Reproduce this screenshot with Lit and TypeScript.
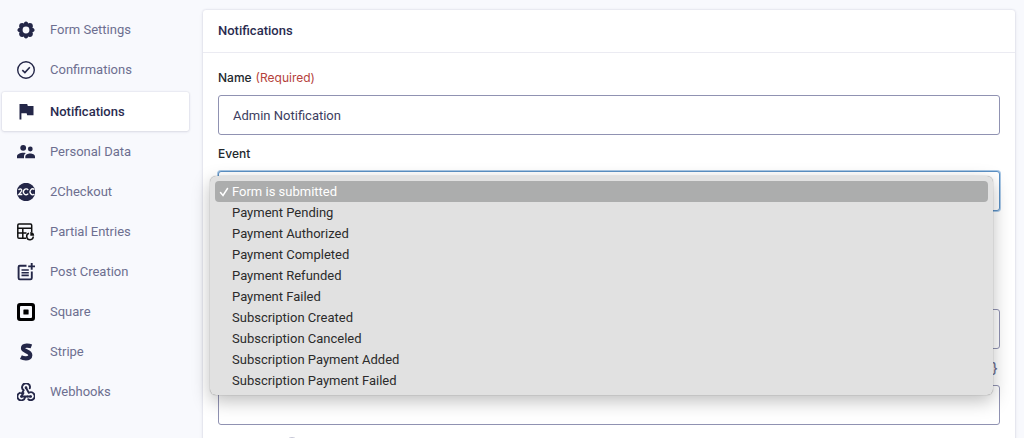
import { LitElement, html, svg, css } from "lit";
import { customElement, property, state } from "lit/decorators.js";
import { classMap } from "lit/directives/class-map.js";

const icons = {
  gear: svg`<path fill-rule="evenodd" d="M7.2 1.4Q9-.6 10.8 1.4L11.3 2.6L12.5 2.1Q15.900 1.900 15.900 5.500L15.400 6.700L16.600 7.200Q18.600 9 16.600 10.800L15.400 11.300L15.900 12.500Q15.900 16.100 12.500 15.900L11.300 15.400L10.800 16.600Q9 18.600 7.200 16.600L6.700 15.400L5.500 15.900Q2.100 16.100 2.100 12.500L2.600 11.300L1.400 10.800Q-.6 9 1.400 7.200L2.600 6.700L2.100 5.500Q2.100 1.900 5.500 2.100L6.700 2.600ZM9 5.600A3.400 3.400 0 1 0 9 12.400A3.400 3.400 0 1 0 9 5.600Z"/>`,
  check: svg`<g fill="none" stroke="currentColor" stroke-width="1.400"><circle cx="9" cy="9" r="8.300"/><path d="M5.300 9.200L7.900 11.600L12.800 6.300" stroke-width="1.600"/></g>`,
  flag: svg`<path d="M2.500 1H10.200L10.800 3H16.500V12.200H10.200L9.600 10.300H4.400V16.500H2.500Z"/>`,
  people: svg`<circle cx="6.200" cy="4.800" r="2.900"/><circle cx="13.300" cy="6" r="2.400"/><path d="M0 15.200V13.300C0 10.900 3.400 9.700 6.200 9.700C7.100 9.700 8 9.800 8.900 10.100C7.700 11 7 12.200 7 13.600V15.200Z"/><path d="M8.300 15.200V13.700C8.300 11.600 11 10.500 13.200 10.500S18 11.600 18 13.700V15.200Z"/>`,
  twoCheckout: svg`<circle cx="9" cy="9" r="9.200"/><g fill="none" stroke="#fff" stroke-width="1.300"><path d="M1.700 7.100Q2 5.900 3.300 5.900Q4.800 6 4.700 7.400Q4.500 8.700 1.900 11.500H5.300"/><path d="M11.200 7A2.700 2.900 0 1 0 11.200 10.700"/><path d="M17.400 6.500A2.700 2.900 0 1 0 17.400 11.100"/></g>`,
  partial: svg`<g fill="none" stroke="#111" stroke-width="1.500"><path d="M9 15.300H2Q.8 15.300 .8 14V2.200Q.8 1 2 1H13.500Q14.700 1 14.700 2.200V9"/><path d="M.8 5.300H14.700M.8 10H9.500M5.800 5.300V15.300"/><path d="M12 10.300A3.300 3.300 0 1 0 16.300 13.500" stroke-width="1.500"/></g><path fill="#111" d="M13.300 8.900A3.800 3.800 0 0 1 17.200 12.700H13.300Z"/>`,
  post: svg`<g fill="none" stroke="currentColor" stroke-width="1.900"><path d="M9.500 2.800H2.800Q1.600 2.800 1.600 4.100V15Q1.600 16.400 2.800 16.400H13.400Q14.800 16.400 14.800 15V8.500"/><path d="M14.700 0V6.800M11.200 3.400H18"/><path d="M4.500 7H11.800M4.500 9.700H11.800M4.500 12.400H11.800" stroke-width="1.600"/></g>`,
  square: svg`<path fill="#000" fill-rule="evenodd" d="M3 0H15Q18 0 18 3V15Q18 18 15 18H3Q0 18 0 15V3Q0 0 3 0ZM4 3Q3 3 3 4V14Q3 15 4 15H14Q15 15 15 14V4Q15 3 14 3ZM7 6.400H11Q11.600 6.400 11.600 7V11Q11.600 11.600 11 11.600H7Q6.400 11.600 6.400 11V7Q6.400 6.400 7 6.400Z"/>`,
  stripe: svg`<path fill="none" stroke="currentColor" stroke-width="4.200" d="M14.400 3.400C12.800 2.800 11.200 2.600 9.500 2.700C7.200 2.800 6 3.900 6 5.300C6 8.600 13.300 8 13.300 12.200C13.300 14.500 11.300 15.400 8.700 15.300C6.900 15.300 5.300 14.900 3.900 14.200"/>`,
  webhook: svg`<g fill="none" stroke-linecap="round" stroke-linejoin="round"><path stroke="currentColor" stroke-width="1.900" d="M12.800 5.300A3.900 3.900 0 1 0 6.700 7.300L4.700 10.500M4.700 13.500H10.500M2.900 9.800A3.900 3.900 0 1 0 8.100 14.200M9 4.800L11.800 9.800A3.900 3.900 0 1 1 11.300 16.200"/><path stroke="currentColor" stroke-width="2.700" d="M9 4.700V4.800M4.400 13.500H4.500M13.600 13.500H13.700"/><path stroke="currentColor" stroke-width="1.900" d="M10.500 13.500H13.500M4.500 13.300L6.500 10"/></g>`,
};

type IconName = keyof typeof icons;

const sections: { label: string; icon: IconName }[] = [
  { label: "Form Settings", icon: "gear" },
  { label: "Confirmations", icon: "check" },
  { label: "Notifications", icon: "flag" },
  { label: "Personal Data", icon: "people" },
  { label: "2Checkout", icon: "twoCheckout" },
  { label: "Partial Entries", icon: "partial" },
  { label: "Post Creation", icon: "post" },
  { label: "Square", icon: "square" },
  { label: "Stripe", icon: "stripe" },
  { label: "Webhooks", icon: "webhook" },
];

const events = [
  "Form is submitted",
  "Payment Pending",
  "Payment Authorized",
  "Payment Completed",
  "Payment Refunded",
  "Payment Failed",
  "Subscription Created",
  "Subscription Canceled",
  "Subscription Payment Added",
  "Subscription Payment Failed",
];

@customElement("settings-nav")
export class SettingsNav extends LitElement {
  @property() current = "";

  static styles = css`
    :host {
      display: block;
      padding: 10px 14px 0 2px;
    }
    .item {
      display: flex;
      align-items: center;
      gap: 15px;
      height: 40px;
      padding-left: 15px;
      box-sizing: border-box;
      color: #6d6f90;
      font-size: 13px;
      line-height: 20px;
      text-decoration: none;
    }
    .active {
      height: 39px;
      margin: 2px 0 1px;
      background: #fff;
      border-radius: 2px;
      box-shadow: 0 0 2px rgba(50, 50, 93, 0.2), 0 1px 3px rgba(50, 50, 93, 0.1);
      color: #2a2b4f;
      font-weight: 500;
    }
    .icon {
      width: 18px;
      height: 18px;
      flex: none;
      fill: currentColor;
      color: #242748;
    }
  `;

  render() {
    return html`<nav aria-label="Settings">
      ${sections.map(
        (s) => html`<a
          href="#"
          class=${classMap({ item: true, active: s.label === this.current })}
          ><svg class="icon" viewBox="0 0 18 18" aria-hidden="true">${icons[s.icon]}</svg
          >${s.label}</a
        >`
      )}
    </nav>`;
  }
}

@customElement("app-root")
export class AppRoot extends LitElement {
  @state() private event = events[0];

  static styles = css`
    :host {
      display: grid;
      grid-template-columns: 203px minmax(0, 1fr);
      height: 100vh;
      overflow: hidden;
      background: #f8f9fd;
      font-family: Roboto, "Liberation Sans", sans-serif;
      font-size: 13px;
      color: #2a2b4f;
    }
    .panel {
      margin: 10px 9px 0 0;
      background: #fff;
      border-radius: 3px;
      box-shadow: 0 0 2px rgba(50, 50, 93, 0.2), 0 1px 4px rgba(50, 50, 93, 0.08);
      height: max-content;
    }
    .title {
      margin: 0;
      padding: 11px 15px;
      border-bottom: 1px solid #ebebf2;
      font-size: 13px;
      line-height: 20px;
      font-weight: 500;
    }
    .form {
      display: flex;
      flex-direction: column;
      gap: 9px;
      padding: 15px;
    }
    .field {
      position: relative;
      display: flex;
      flex-direction: column;
      gap: 7px;
    }
    .caption {
      display: flex;
      align-items: center;
      gap: 4px;
      min-height: 20px;
      font-family: Inter, "Liberation Sans", sans-serif;
      font-size: 12px;
      line-height: 20px;
      font-weight: 500;
      color: #23282d;
    }
    .required {
      color: #b5423c;
      font-weight: 400;
    }
    .control {
      box-sizing: border-box;
      width: 100%;
      height: 40px;
      margin: 0;
      padding: 0 14px;
      border: 1px solid #9092b2;
      border-radius: 3px;
      background: #fff;
      color: #3c3d60;
      font: inherit;
    }
    .open {
      appearance: none;
      border-color: #5b90c4;
      box-shadow: 0 0 0 1px #a9c8e6;
      outline: none;
      color: transparent;
    }
    .choices {
      display: flex;
      gap: 16px;
      height: 26px;
      align-items: center;
    }
    .merge {
      margin-left: auto;
      padding: 0 2px;
      border: 0;
      background: none;
      color: #6d6f90;
      font: inherit;
      font-size: 14px;
      line-height: 20px;
    }
    .help {
      width: 14px;
      height: 14px;
      box-sizing: border-box;
      padding: 0;
      border: 1px solid #c4c5d6;
      border-radius: 50%;
      background: #fff;
    }
    .menu {
      position: absolute;
      z-index: 1;
      top: 32px;
      left: -8px;
      right: 7px;
      margin: 0;
      padding: 5px 5px 4px;
      border-radius: 6px;
      background: #e1e1e1;
      box-shadow: 0 0 1px rgba(0, 0, 0, 0.5), 0 6px 18px rgba(0, 0, 0, 0.26);
      color: #2b2b2b;
      list-style: none;
    }
    .option {
      display: flex;
      align-items: center;
      height: 21px;
      border-radius: 4px;
      line-height: 21px;
    }
    .selected {
      background: #acadad;
      color: #fff;
    }
    .tick {
      width: 10px;
      height: 10px;
      padding: 0 3px 0 4px;
      flex: none;
      fill: none;
      stroke: currentColor;
      stroke-width: 1.5;
      stroke-linecap: round;
      visibility: hidden;
    }
    .selected .tick {
      visibility: visible;
    }
  `;

  private renderOption(name: string) {
    const selected = name === this.event;
    return html`<li
      role="option"
      aria-selected=${selected}
      class=${classMap({ option: true, selected })}
      @click=${() => (this.event = name)}
    >
      <svg class="tick" viewBox="0 0 10 10" aria-hidden="true"><path d="M1.500 5.500L4 8.500L8.500 1.500" /></svg>
      <span>${name}</span>
    </li>`;
  }

  render() {
    return html`
      <settings-nav current="Notifications"></settings-nav>
      <main class="panel">
        <h1 class="title">Notifications</h1>
        <form class="form">
          <div class="field">
            <label class="caption" for="name">Name <span class="required">(Required)</span></label>
            <input class="control" id="name" type="text" value="Admin Notification" />
          </div>
          <div class="field">
            <label class="caption" for="event">Event</label>
            <select class="control open" id="event" .value=${this.event}>
              ${events.map((e) => html`<option>${e}</option>`)}
            </select>
            <ul class="menu" role="listbox" aria-label="Event">
              ${events.map((e) => this.renderOption(e))}
            </ul>
          </div>
          <div class="field">
            <div class="caption"></div>
            <div class="choices">
              <input type="radio" name="to" aria-label="Enter email" checked />
              <input type="radio" name="to" aria-label="Select a field" />
            </div>
          </div>
          <div class="field">
            <div class="caption"></div>
            <input class="control" type="text" aria-label="Send to email" />
          </div>
          <div class="field">
            <div class="caption">
              <button class="merge" type="button" aria-label="Merge tags">{..}</button>
            </div>
            <input class="control" type="text" aria-label="From name" />
          </div>
          <div class="field">
            <div class="caption">
              <label for="mail">From Email</label>
              <button class="help" type="button" aria-label="Help"></button>
            </div>
            <input class="control" id="mail" type="text" />
          </div>
        </form>
      </main>
    `;
  }
}
